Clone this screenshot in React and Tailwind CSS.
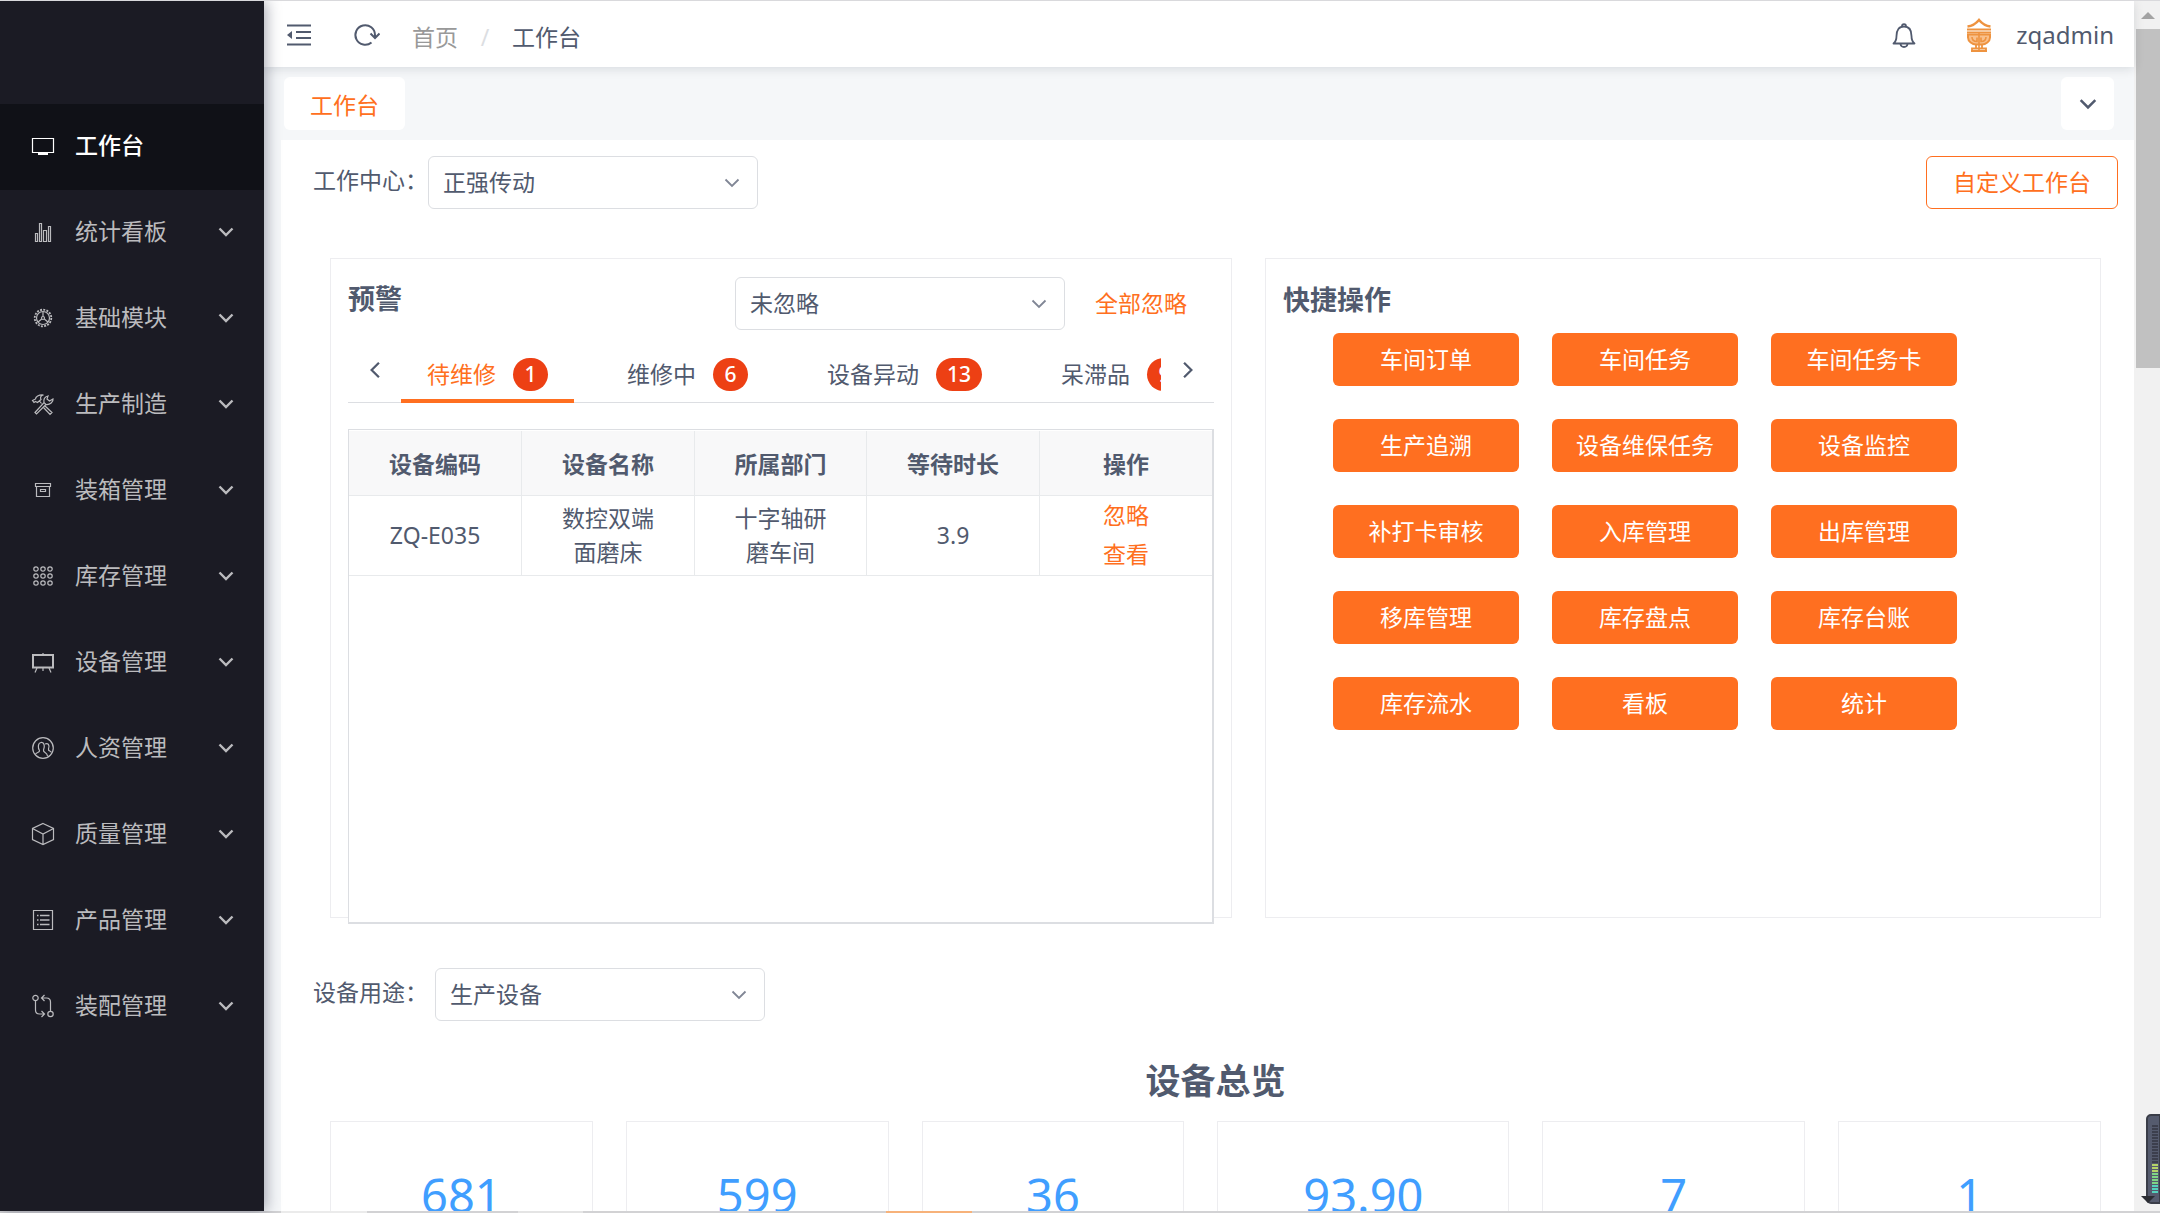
import { useState } from 'react';
import clsx from 'clsx';

const MENU = [
  { label: '工作台', icon: 'monitor', leaf: true },
  { label: '统计看板', icon: 'bars' },
  { label: '基础模块', icon: 'cog' },
  { label: '生产制造', icon: 'tools' },
  { label: '装箱管理', icon: 'box' },
  { label: '库存管理', icon: 'grid' },
  { label: '设备管理', icon: 'easel' },
  { label: '人资管理', icon: 'people' },
  { label: '质量管理', icon: 'cube' },
  { label: '产品管理', icon: 'list' },
  { label: '装配管理', icon: 'flow' },
];

const TABS = [
  { label: '待维修', count: 1 },
  { label: '维修中', count: 6 },
  { label: '设备异动', count: 13 },
  { label: '呆滞品', count: 9 },
];

const SHORTCUTS = [
  '车间订单', '车间任务', '车间任务卡',
  '生产追溯', '设备维保任务', '设备监控',
  '补打卡审核', '入库管理', '出库管理',
  '移库管理', '库存盘点', '库存台账',
  '库存流水', '看板', '统计',
];

const STATS = ['681', '599', '36', '93.90', '7', '1'];

const COLUMNS = ['设备编码', '设备名称', '所属部门', '等待时长', '操作'];

const ICONS = {
  monitor: (
    <>
      <path d="M1.5 4.5h21v14h-21z" />
      <path d="M7 20h10" strokeWidth="2" />
    </>
  ),
  bars: <path d="M4.5 21.5v-8h2v8zM8.500 21.500v-18h2v18zM12.500 21.500v-11h3v11zM17.500 21.500v-15h2v15z" />,
  cog: (
    <>
      <circle cx="12" cy="12" r="6.500" />
      <circle cx="12" cy="12" r="8.300" strokeDasharray="2 1.260" strokeWidth="1.800" />
      <circle cx="12" cy="12" r="1.500" />
      <path d="M12 10.500V6M10.700 13l-3.600 3M13.300 13l3.600 3" />
    </>
  ),
  tools: (
    <>
      <path d="M4 20.500l9-10 2 2-9.500 9.500zM13 10.500c-.5-2.500.5-5.500 4-6.500l-1 3 2.500 2 3.500-2c.5 3-3 6-7 5.500" />
      <path d="M1.500 8.500l3-1.500c0-2 3-4.500 8-4-3 .8-3.500 2.500-2.500 4.500l-3.500 3-2-1-1.500 1zM8.500 9l2 2.500M14 14l7 6.500-2 2-6.500-7" />
    </>
  ),
  box: (
    <>
      <path d="M4.500 5.500h15v3h-15zM5.500 8.500v10h13v-10" />
      <path d="M9.500 11.500h5v2h-5z" />
    </>
  ),
  grid: (
    <>
      {[5, 12, 19].map((cy) => [5, 12, 19].map((cx) => <circle key={`${cx}-${cy}`} cx={cx} cy={cy} r="2.200" />))}
    </>
  ),
  easel: (
    <>
      <path d="M2 5h20v12.500H2z" strokeWidth="2" />
      <path d="M12 3v2M12 18v3M6 18l-2 4.500M18 18l2 4.500" />
    </>
  ),
  people: (
    <>
      <circle cx="12" cy="12" r="10.300" />
      <path d="M4.500 18.500c.5-2.500 4.500-1.500 4-4-1.500-2-2-7.500 1.500-8s4 4 2.500 7.500c-.5 3 3.500 2 4 6M14 8c3-1.500 5 1 3.500 5-.5 2.500 2 1.500 3 3.500" />
    </>
  ),
  cube: <path d="M12 1.500l10.500 5v11L12 22.500l-10.500-5v-11zM1.500 6.500L12 12l10.500-5.500M12 12v10.500" />,
  list: (
    <>
      <path d="M2.500 2.500h19v19h-19z" />
      <path d="M6 7.500h1.500M6 12h1.500M6 16.500h1.500M9 7.500h9.500M9 12h9.500M9 16.500h9.500" strokeWidth="1.500" />
    </>
  ),
  flow: (
    <>
      <circle cx="4.500" cy="4" r="2.700" />
      <circle cx="19.500" cy="20" r="2.700" />
      <path d="M4.500 6.700V16c0 2.500 1.500 4 4 4h5M10.500 17l3 3-3 3M19.500 17.300V8c0-2.500-1.500-4-4-4h-5M13.500 1l-3 3 3 3" />
    </>
  ),
};

const MenuIcon = ({ name }) => (
  <svg className="w-6 h-6 flex-shrink-0" viewBox="0 0 24 24" fill="none" stroke="currentColor" strokeWidth="1.2" aria-hidden="true">
    {ICONS[name]}
  </svg>
);

const Chevron = ({ className = '', strokeWidth = 2 }) => (
  <svg className={className} viewBox="0 0 16 16" fill="none" stroke="currentColor" strokeWidth={strokeWidth} aria-hidden="true">
    <path d="M1.500 4.500L8 11l6.500-6.500" />
  </svg>
);

const Select = ({ id, label, options }) => (
  <div className="relative w-[330px]">
    <select
      id={id}
      aria-label={label}
      className="w-full h-[53px] pl-[14px] pr-10 appearance-none bg-white border border-[#dcdee2] rounded-md outline-none focus:border-[#ff6f20]"
    >
      {options.map((o) => (
        <option key={o}>{o}</option>
      ))}
    </select>
    <Chevron className="absolute right-[18px] top-[19px] w-4 h-4 text-[#808695] pointer-events-none" strokeWidth={1.8} />
  </div>
);

const Sidebar = () => (
  <aside className="relative z-20 w-[264px] flex-shrink-0 bg-[#1b1b24] pt-[103px] shadow-[2px_0_14px_rgba(29,35,60,0.4)]">
    <nav>
      {MENU.map((item) => (
        <a
          key={item.label}
          href="#"
          className={clsx(
            'flex items-center h-[86px] pl-[31px] pr-[30px] pb-0.5',
            item.leaf ? 'bg-[#101117] text-white font-medium' : 'text-[#bbbbbe]'
          )}
        >
          <MenuIcon name={item.icon} />
          <span className="ml-5 flex-1 pb-0.5">{item.label}</span>
          {!item.leaf && <Chevron className="w-4 h-4" strokeWidth={2.4} />}
        </a>
      ))}
    </nav>
  </aside>
);

const Header = () => (
  <header className="relative z-10 flex items-center h-[66px] flex-shrink-0 bg-white pl-[22px] pr-5 pt-0.5 shadow-[0_2px_10px_rgba(0,21,41,0.12)]">
    <button type="button" aria-label="收起菜单">
      <svg className="w-[26px] h-[26px]" viewBox="0 0 26 26" fill="none" stroke="currentColor" strokeWidth="2">
        <path d="M1 3.500h24M10 10h15M10 16h15M1 22.500h24" />
        <path d="M1 13l5-4v8z" fill="currentColor" stroke="none" />
      </svg>
    </button>
    <button type="button" aria-label="刷新" className="ml-10">
      <svg className="w-7 h-7" viewBox="0 0 28 28" fill="none" stroke="currentColor" strokeWidth="2">
        <path d="M19.500 21.500a9.800 9.800 0 1 1 3.500-7.500v2" />
        <path d="M18.500 12.500l4.500 4.500 4.500-4.500" />
      </svg>
    </button>
    <nav className="ml-8 flex items-center pt-1">
      <a href="#" className="text-[#999]">首页</a>
      <span className="w-[54px] text-center text-[#dcdee2]">/</span>
      <span>工作台</span>
    </nav>
    <button type="button" aria-label="通知" className="ml-auto">
      <svg className="w-7 h-7" viewBox="0 0 28 28" fill="none" stroke="currentColor" strokeWidth="1.800">
        <path d="M3.500 22.500c2.500-2 3-4 3-7.500 0-6 2.500-9.500 7.500-9.500s7.500 3.500 7.500 9.500c0 3.500.5 5.500 3 7.500z" strokeLinejoin="round" />
        <path d="M12 5.300c0-3 4-3 4 0M10.500 23c.5 4 6.500 4 7 0" />
      </svg>
    </button>
    <svg className="ml-12 w-[26px] h-[34px]" viewBox="0 0 26 34" fill="none" stroke="#ee9340" aria-hidden="true">
      <path d="M1.500 8.500C6 8 10 5.500 13 2c3 3.500 7 6 11.500 6.500" strokeWidth="2.600" />
      <path d="M1 11.500h24M1 14.500h24" strokeWidth="1.800" />
      <path d="M2 16.500h22v3c0 4-4.500 7-8 7h-6c-3.500 0-8-3-8-7z" strokeWidth="2" fill="#f9c08c" />
      <path d="M13 14v19M6 19c0 3 2 4.500 5 4.500v-4M20 19c0 3-2 4.500-5 4.500v-4" strokeWidth="1.600" />
      <path d="M10 26v4M16 26v4M6 32.500v-2h14v2M5 33h16" strokeWidth="1.800" />
    </svg>
    <span className="ml-6 text-2xl">zqadmin</span>
  </header>
);

const PageTabs = () => (
  <div className="flex justify-between items-center h-[73px] flex-shrink-0 px-5">
    <button type="button" className="h-[53px] px-[26px] pt-1 rounded-md bg-white text-[#ff6f20]">
      工作台
    </button>
    <button type="button" aria-label="更多标签" className="w-[53px] h-[53px] flex items-center justify-center rounded-md bg-white">
      <Chevron className="w-[18px] h-[18px]" strokeWidth={2.2} />
    </button>
  </div>
);

const WarningPanel = () => {
  const [active, setActive] = useState(0);

  return (
    <section className="h-[660px] border border-[#ededf0] px-[17px] pt-[18px] min-w-0">
      <div className="flex items-center h-[53px]">
        <h2 className="text-[27px] font-bold mr-auto pb-2">预警</h2>
        <Select id="ignore-state" label="预警状态" options={['未忽略', '已忽略']} />
        <button type="button" className="ml-[30px] mr-[27px] text-[#ff6f20]">全部忽略</button>
      </div>

      <div className="mt-[17px] flex h-[56px] border-b border-[#dcdee2]">
        <button type="button" aria-label="上一个" className="w-[53px] flex-shrink-0 flex justify-center pt-[14px]">
          <Chevron className="w-[18px] h-[18px] rotate-90" />
        </button>
        <div role="tablist" className="flex flex-1 h-[56px] min-w-0 overflow-hidden gap-[27px]">
          {TABS.map((t, i) => (
            <button
              key={t.label}
              type="button"
              role="tab"
              aria-selected={active === i}
              onClick={() => setActive(i)}
              className={clsx(
                'flex items-center flex-shrink-0 px-[26px] pt-0.5 border-b-4',
                active === i ? 'border-[#ff6f20] text-[#ff6f20]' : 'border-transparent'
              )}
            >
              {t.label}
              <span className="ml-[17px] h-[33px] min-w-[35px] px-[11px] leading-[33px] rounded-full bg-[#ed4014] text-white text-[21px] font-medium">
                {t.count}
              </span>
            </button>
          ))}
        </div>
        <button type="button" aria-label="下一个" className="w-[53px] flex-shrink-0 flex justify-center pt-[14px]">
          <Chevron className="w-[18px] h-[18px] -rotate-90" />
        </button>
      </div>

      <div className="mt-[26px] h-[495px] overflow-hidden bg-white border border-r-2 border-b-2 border-[#dcdee2] pt-px">
        <table className="w-full table-fixed text-center border-collapse">
          <thead>
            <tr className="h-16 bg-[#f8f8f9] border-b border-[#e8eaec]">
              {COLUMNS.map((c) => (
                <th key={c} className="font-bold pt-0.5 border-r border-[#e8eaec] last:border-r-0">{c}</th>
              ))}
            </tr>
          </thead>
          <tbody>
            <tr className="h-20 border-b border-[#e8eaec]">
              <td className="border-r border-[#e8eaec]">ZQ-E035</td>
              <td className="border-r border-[#e8eaec] px-[30px] leading-[34px]">数控双端面磨床</td>
              <td className="border-r border-[#e8eaec] px-[30px] leading-[34px]">十字轴研磨车间</td>
              <td className="border-r border-[#e8eaec]">3.9</td>
              <td className="text-[#ff6f20] leading-[39px]">
                <a href="#" className="block">忽略</a>
                <a href="#" className="block">查看</a>
              </td>
            </tr>
          </tbody>
        </table>
      </div>
    </section>
  );
};

const ShortcutPanel = () => (
  <section className="h-[660px] border border-[#ededf0] px-[17px] pt-[18px]">
    <h2 className="text-[27px] leading-[45px] font-bold">快捷操作</h2>
    <div className="mt-[11px] ml-[50px] flex flex-wrap gap-[33px] max-w-[630px]">
      {SHORTCUTS.map((s) => (
        <button key={s} type="button" className="w-[186px] h-[53px] rounded-md bg-[#ff6f20] text-white">
          {s}
        </button>
      ))}
    </div>
  </section>
);

const ScrollTrack = () => (
  <div className="w-[26px] flex-shrink-0 bg-[#f1f1f1] pl-0.5 flex flex-col" aria-hidden="true">
    <div className="h-7 flex items-center justify-center">
      <svg className="w-[14px] h-[7px]" viewBox="0 0 14 7">
        <path d="M0 7l7-7 7 7z" fill="#a3a3a3" />
      </svg>
    </div>
    <div className="h-[339px] bg-[#c1c1c1]" />
  </div>
);

// Small level meter docked at the window's edge
const LevelMeter = () => (
  <div className="absolute z-30 right-0 bottom-[9px]" aria-hidden="true">
    <svg className="w-[20px] h-[90px]" viewBox="0 0 20 90">
      <path d="M20 1h-9a4 4 0 0 0-4 4v80a4 4 0 0 0 4 4h9z" fill="#555b6e" stroke="#3a3d48" strokeWidth="2" />
      {Array.from({ length: 23 }, (_, i) => (
        <rect key={i} x="12" y={11 + i * 3} width="6" height="2" fill={i < 13 ? '#3c3f4d' : i < 16 ? '#b4d368' : i < 20 ? '#7fd685' : '#54d3bd'} />
      ))}
      <path d="M1 82h14l-7 7z" fill="#2b2d33" />
    </svg>
  </div>
);

export default function App() {
  return (
    <div className="relative h-screen flex flex-col overflow-hidden border-t border-[#d9d9dc] bg-white text-[23px] text-[#515a6e] font-['Noto_Sans','Noto_Sans_CJK_SC',sans-serif]">
      <div className="flex flex-1 min-h-0">
        <Sidebar />
        <div className="flex-1 min-w-0 flex flex-col bg-[#f5f7f9]">
          <Header />
          <PageTabs />
          <main className="flex-1 min-h-0 overflow-hidden ml-[17px] bg-white pl-8 pr-4 pt-4">
            <div className="flex items-center h-[53px]">
              <label htmlFor="work-center" className="pb-1">工作中心：</label>
              <Select id="work-center" options={['正强传动']} />
              <button type="button" className="ml-auto h-[53px] px-[26px] border border-[#ff6f20] rounded-md text-[#ff6f20]">
                自定义工作台
              </button>
            </div>

            <div className="mt-[49px] mx-[17px] grid grid-cols-[902fr_836fr] gap-[33px]">
              <WarningPanel />
              <ShortcutPanel />
            </div>

            <div className="mt-[50px] flex items-center h-[53px]">
              <label htmlFor="device-usage" className="pb-1 mr-[7px]">设备用途：</label>
              <Select id="device-usage" options={['生产设备']} />
            </div>

            <h2 className="mt-[30px] text-[35px] leading-[60px] font-bold text-center">设备总览</h2>
            <div className="mt-[10px] mx-[17px] grid grid-cols-[9fr_9fr_9fr_10fr_9fr_9fr] gap-[33px]">
              {STATS.map((s) => (
                <div key={s} className="h-[230px] border border-[#ededf0] pt-10 text-center text-[47px] leading-[66px] text-[#409eff]">
                  {s}
                </div>
              ))}
            </div>
          </main>
        </div>
        <ScrollTrack />
      </div>
      <div className="h-0.5 flex-shrink-0 flex bg-[#d2d2d4]">
        <div className="w-[13%]" />
        <div className="w-[4%] bg-[#ebebeb]" />
        <div className="w-[7%]" />
        <div className="w-[3%] bg-[#e4e4e4]" />
        <div className="w-[14%]" />
        <div className="w-[4%] bg-[#f7b27a]" />
      </div>
      <LevelMeter />
    </div>
  );
}
